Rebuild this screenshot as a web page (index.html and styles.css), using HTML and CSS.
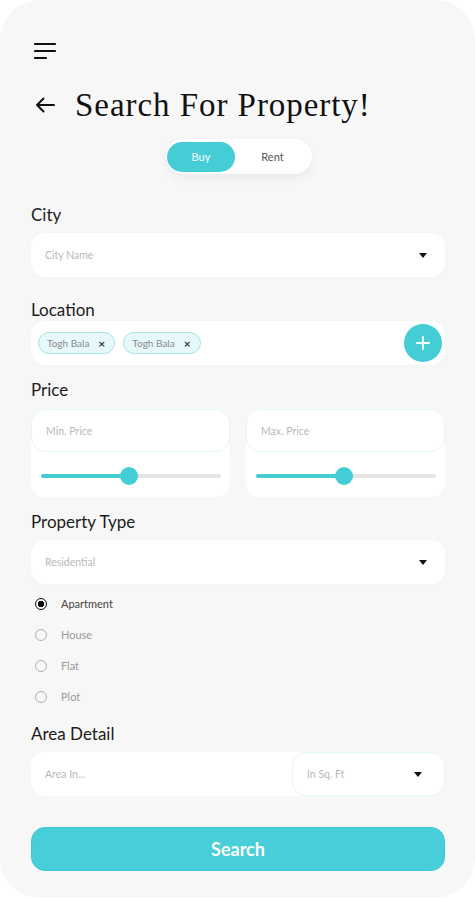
FILE: index.html
```html
<!DOCTYPE html>
<html lang="en">
<head>
    <meta charset="UTF-8">
    <meta name="viewport" content="width=device-width, initial-scale=1.0">
    <title>Search For Property</title>
    <link rel="stylesheet" href="styles.css">
</head>
<body>
    <div class="phone">
        <div class="menu">
            <svg width="22" height="18" viewBox="0 0 22 18">
                <path d="M1 2h20M1 9h20M1 16h11" stroke="#111" stroke-width="2.2" stroke-linecap="round" fill="none"/>
            </svg>
        </div>

        <div class="header">
            <svg class="back" width="20" height="16" viewBox="0 0 20 16">
                <path d="M19 8H2M8.5 1.5L2 8l6.5 6.5" stroke="#111" stroke-width="2" stroke-linecap="round" stroke-linejoin="round" fill="none"/>
            </svg>
            <h1>Search For Property!</h1>
        </div>

        <div class="toggle-wrap">
            <div class="toggle">
                <span class="toggle-item active">Buy</span>
                <span class="toggle-item">Rent</span>
            </div>
        </div>

        <div class="label label-city">City</div>
        <div class="field">
            <span class="placeholder">City Name</span>
            <span class="caret"></span>
        </div>

        <div class="label label-location">Location</div>
        <div class="field location">
            <span class="chip">Togh Bala <b>&times;</b></span>
            <span class="chip">Togh Bala <b>&times;</b></span>
            <span class="add-btn">
                <svg width="14" height="14" viewBox="0 0 14 14">
                    <path d="M7 1v12M1 7h12" stroke="#fff" stroke-width="1.8" stroke-linecap="round"/>
                </svg>
            </span>
        </div>

        <div class="label label-price">Price</div>
        <div class="price-row">
            <div class="price-card">
                <div class="price-input"><span class="placeholder">Min. Price</span></div>
                <div class="slider">
                    <div class="track"><div class="fill" style="width: 49%"></div><span class="thumb" style="left: 49%"></span></div>
                </div>
            </div>
            <div class="price-card">
                <div class="price-input"><span class="placeholder">Max. Price</span></div>
                <div class="slider">
                    <div class="track"><div class="fill" style="width: 49%"></div><span class="thumb" style="left: 49%"></span></div>
                </div>
            </div>
        </div>

        <div class="label label-type">Property Type</div>
        <div class="field">
            <span class="placeholder">Residential</span>
            <span class="caret"></span>
        </div>

        <div class="radios">
            <div class="radio checked"><span class="dot"></span>Apartment</div>
            <div class="radio"><span class="dot"></span>House</div>
            <div class="radio"><span class="dot"></span>Flat</div>
            <div class="radio"><span class="dot"></span>Plot</div>
        </div>

        <div class="label label-area">Area Detail</div>
        <div class="area-row">
            <div class="area-input"><span class="placeholder">Area In...</span></div>
            <div class="area-unit">
                <span class="placeholder">In Sq. Ft</span>
                <span class="caret"></span>
            </div>
        </div>

        <button class="search-btn">Search</button>
    </div>
</body>
</html>
```

FILE: styles.css
```css
body {
    margin: 0;
    background: #ffffff;
    font-family: Lato, "Open Sans", sans-serif;
}
.phone {
    height: 898px;
    box-sizing: border-box;
    background: #f7f7f7;
    border-radius: 40px;
    padding: 42px 30px 0 31px;
}
.menu {
    height: 20px;
    margin-left: 3px;
}
.header {
    display: flex;
    align-items: center;
    margin-top: 28px;
    height: 30px;
}
.back {
    margin-left: 4px;
    margin-right: 20px;
}
h1 {
    margin: 0;
    font-family: "Liberation Serif", serif;
    font-weight: normal;
    font-size: 33px;
    color: #111;
    letter-spacing: 0.95px;
}
.toggle-wrap {
    display: flex;
    justify-content: center;
    margin-top: 19px;
    padding-left: 2px;
}
.toggle {
    display: flex;
    align-items: center;
    width: 146px;
    height: 35px;
    box-sizing: border-box;
    padding: 2px 2px 2px 1px;
    background: #fff;
    border-radius: 18px;
    box-shadow: 0 4px 10px rgba(0,0,0,0.06);
}
.toggle-item {
    flex: 1;
    height: 30px;
    line-height: 30px;
    text-align: center;
    font-size: 11px;
    color: #555;
    border-radius: 15px;
}
.toggle-item.active {
    flex: 0 0 68px;
    background: #45cdd6;
    color: #fff;
}
.label {
    font-size: 17px;
    line-height: 20px;
    color: #1c1c1c;
    margin-bottom: 8px;
}
.label-city { margin-top: 31px; }
.label-location { margin-top: 23px; margin-bottom: 1px; }
.label-price { margin-top: 15px; margin-bottom: 9px; }
.label-type { margin-top: 15px; margin-bottom: 8px; }
.label-area { margin-top: 12px; margin-bottom: 8px; }
.field {
    display: flex;
    align-items: center;
    height: 44px;
    background: #fff;
    border-radius: 14px;
    padding: 0 18px 0 14px;
    box-shadow: 0 1px 4px rgba(0,0,0,0.02);
}
.placeholder {
    flex: 1;
    font-size: 10.5px;
    color: #b9b9b9;
}
.caret {
    width: 0;
    height: 0;
    border-left: 4px solid transparent;
    border-right: 4px solid transparent;
    border-top: 5px solid #111;
}
.location {
    padding: 0 3px 0 7px;
    gap: 8px;
}
.chip {
    display: flex;
    align-items: center;
    height: 22px;
    box-sizing: border-box;
    padding: 0 9px 0 8px;
    background: #e6f8fa;
    border: 1px solid #a9e3e8;
    border-radius: 11px;
    font-size: 10px;
    color: #8a8a8a;
}
.chip b {
    margin-left: 9px;
    font-size: 12px;
    color: #333;
}
.add-btn {
    margin-left: auto;
    width: 38px;
    height: 38px;
    border-radius: 50%;
    background: #45cdd6;
    display: flex;
    align-items: center;
    justify-content: center;
}
.price-row {
    display: flex;
    gap: 16px;
}
.price-card {
    flex: 1;
    background: #fff;
    border-radius: 14px;
    height: 88px;
}
.price-input {
    display: flex;
    align-items: center;
    height: 43px;
    box-sizing: border-box;
    padding-left: 14px;
    border: 1px solid #e1f6f8;
    border-radius: 14px;
}
.slider {
    padding: 22px 9px 0 10px;
}
.track {
    position: relative;
    height: 4px;
    background: #e4e4e4;
    border-radius: 2px;
}
.fill {
    height: 4px;
    background: #45cdd6;
    border-radius: 2px;
}
.thumb {
    position: absolute;
    top: -7px;
    width: 18px;
    height: 18px;
    margin-left: -9px;
    border-radius: 50%;
    background: #45cdd6;
}
.radios {
    margin-top: 4px;
    margin-left: 4px;
}
.radio {
    display: flex;
    align-items: center;
    height: 31px;
    font-size: 11px;
    color: #9a9a9a;
}
.radio.checked {
    color: #444;
}
.dot {
    width: 12px;
    height: 12px;
    box-sizing: border-box;
    border: 1.5px solid #b0b0b0;
    border-radius: 50%;
    margin-right: 14px;
}
.radio.checked .dot {
    border-color: #111;
    background: radial-gradient(circle, #111 0 3px, transparent 3.5px);
}
.area-row {
    display: flex;
    height: 44px;
    background: #fff;
    border-radius: 14px;
}
.area-input {
    flex: 1;
    display: flex;
    align-items: center;
    padding-left: 14px;
}
.area-unit {
    display: flex;
    align-items: center;
    width: 153px;
    box-sizing: border-box;
    padding: 0 22px 0 14px;
    border: 1px solid #e1f6f8;
    border-radius: 14px;
}
.search-btn {
    display: block;
    width: 100%;
    height: 44px;
    margin-top: 31px;
    border: 1px solid #3fc6d0;
    border-radius: 14px;
    background: #48ced8;
    color: #fff;
    font-family: Lato, sans-serif;
    font-weight: bold;
    font-size: 18px;
    cursor: pointer;
}
```
